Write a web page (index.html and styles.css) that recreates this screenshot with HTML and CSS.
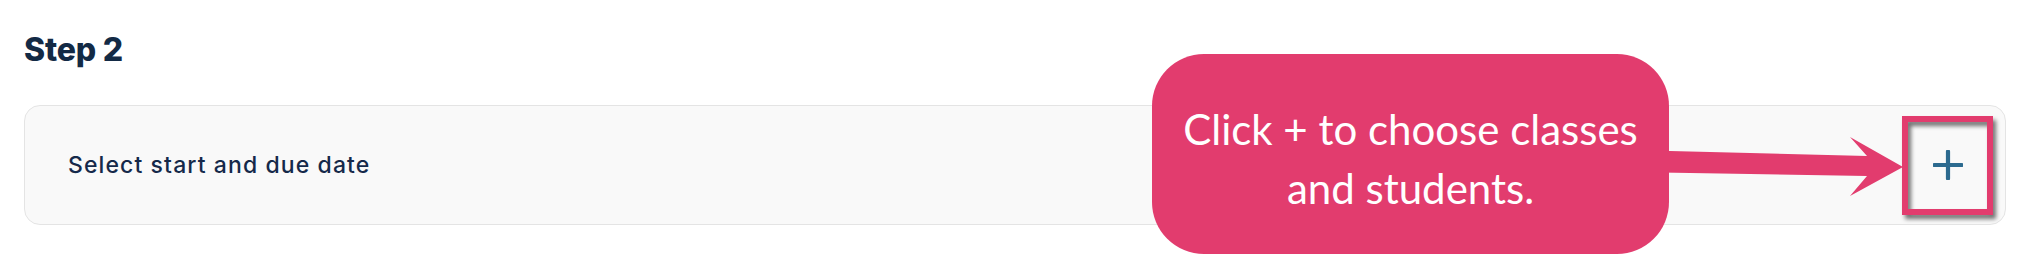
FILE: index.html
```html
<!DOCTYPE html>
<html>
<head>
<meta charset="utf-8">
<link rel="stylesheet" href="styles.css">
</head>
<body>
<div class="page">
  <h2 class="title">Step 2</h2>
  <div class="card">
    <span class="label">Select start and due date</span>
    <div class="add-btn">
      <svg class="plus" width="30" height="30" viewBox="0 0 30 30"><path d="M15 1.5V28.5M1.5 15H28.5" stroke="#2c6a8f" stroke-width="4.2" stroke-linecap="round"/></svg>
      <div class="highlight"></div>
    </div>
  </div>
  <svg class="arrow" width="300" height="70" viewBox="0 0 300 70">
    <polygon points="0,13 237,19 220,0 273,30 220,59 237,39 0,35" fill="#e23c6e"/>
  </svg>
  <div class="callout">Click + to choose classes<br>and students.</div>
</div>
</body>
</html>
```
FILE: styles.css
```css
html, body {
  margin: 0;
  padding: 0;
  background: #ffffff;
}
.page {
  position: relative;
  width: 2024px;
  height: 260px;
  padding: 31px 18px 0 24px;
  box-sizing: border-box;
}
.title {
  margin: 0;
  font-family: "Inter", sans-serif;
  font-weight: 800;
  font-size: 32px;
  line-height: 38px;
  color: #132a45;
  letter-spacing: -0.2px;
}
.card {
  margin-top: 36px;
  height: 120px;
  box-sizing: border-box;
  background: #f9f9f9;
  border: 1px solid #e4e4e4;
  border-radius: 16px;
  display: flex;
  align-items: center;
  justify-content: space-between;
  padding: 0 12px 0 43px;
}
.label {
  font-family: "Inter", sans-serif;
  font-weight: 500;
  font-size: 23px;
  color: #15294a;
  letter-spacing: 1.1px;
}
.add-btn {
  position: relative;
  width: 91px;
  height: 99px;
  display: flex;
  align-items: center;
  justify-content: center;
}
.highlight {
  position: absolute;
  inset: 0;
  border: 6px solid #e23c6e;
  filter: drop-shadow(3px 4px 2px rgba(0,0,0,0.55));
}
.arrow {
  position: absolute;
  left: 1630px;
  top: 137px;
}
.callout {
  position: absolute;
  left: 1152px;
  top: 54px;
  width: 517px;
  height: 200px;
  box-sizing: border-box;
  padding-top: 10px;
  background: #e23c6e;
  border-radius: 52px;
  color: #ffffff;
  font-family: "Lato", sans-serif;
  font-size: 42px;
  line-height: 59px;
  text-align: center;
  display: flex;
  align-items: center;
  justify-content: center;
}
```
